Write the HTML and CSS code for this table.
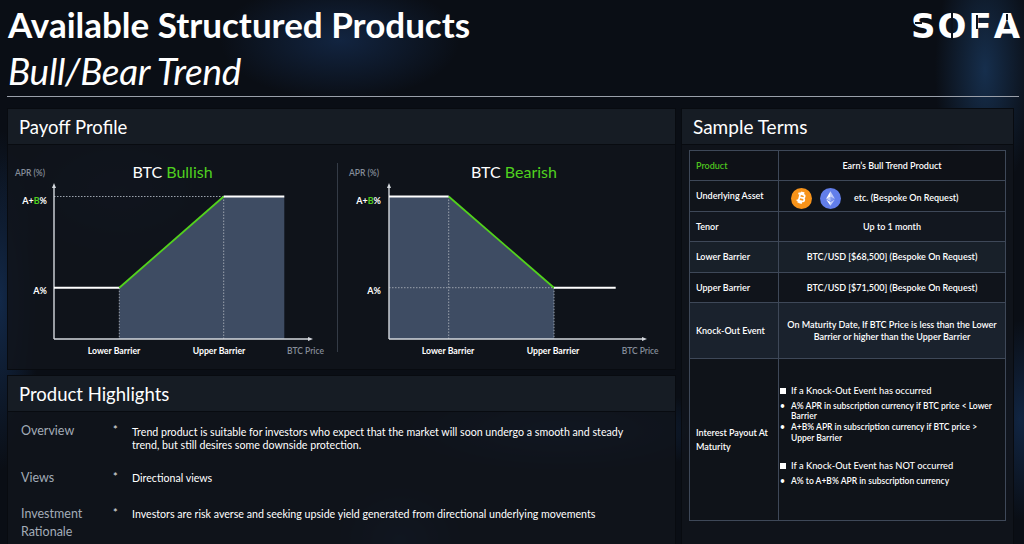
FILE: index.html
```html
<!DOCTYPE html>
<html lang="en">
<head>
<meta charset="utf-8">
<title>Available Structured Products</title>
<link rel="stylesheet" href="styles.css">
</head>
<body>
<header class="top">
  <div class="titles">
    <h1 class="title">Available Structured Products</h1>
    <h2 class="subtitle">Bull/Bear Trend</h2>
  </div>
  <div class="logo"><span class="l-s">S</span><span class="l-o">O</span><span class="l-f">F</span><span class="l-a">A</span></div>
</header>
<div class="rule"></div>
<main class="grid">
  <div class="leftcol">
    <section class="panel payoff">
      <div class="panel-head">Payoff Profile</div>
      <div class="charts">
        <svg class="chart" width="329" height="215" viewBox="0 0 329 215">
          <text x="7" y="26" class="axis-t">APR (%)</text>
          <text x="164.5" y="27.5" class="ttl" text-anchor="middle">BTC <tspan class="g">Bullish</tspan></text>
          <polygon points="111.3,137.7 215.7,46.5 276.3,46.5 276.3,189 111.3,189" class="fill"/>
          <line x1="46" y1="46.5" x2="215.7" y2="46.5" class="dot"/>
          <line x1="215.7" y1="46.5" x2="215.7" y2="189" class="dot"/>
          <line x1="111.3" y1="137.7" x2="111.3" y2="189" class="dot"/>
          <line x1="46" y1="189" x2="46" y2="37" class="ax"/>
          <polygon points="46,33 44,38 48,38" class="arrow"/>
          <line x1="46" y1="189" x2="301" y2="189" class="ax"/>
          <polygon points="305,189 300,187 300,191" class="arrow"/>
          <line x1="46" y1="137.7" x2="111.3" y2="137.7" class="wl"/>
          <line x1="111.3" y1="137.7" x2="215.7" y2="46.5" class="gl"/>
          <line x1="215.7" y1="46.5" x2="276.3" y2="46.5" class="wl"/>
          <text x="39" y="53.5" class="lvl" text-anchor="end">A+<tspan class="g">B</tspan>%</text>
          <text x="39" y="143.5" class="lvl" text-anchor="end">A%</text>
          <text x="106" y="204" class="xl" text-anchor="middle">Lower Barrier</text>
          <text x="211" y="204" class="xl" text-anchor="middle">Upper Barrier</text>
          <text x="279" y="204" class="axis-t">BTC Price</text>
        </svg>
        <div class="sep"></div>
        <svg class="chart" width="338" height="215" viewBox="0 0 338 215">
          <text x="11" y="26" class="axis-t">APR (%)</text>
          <text x="176" y="27.5" class="ttl" text-anchor="middle">BTC <tspan class="g">Bearish</tspan></text>
          <polygon points="51,46.5 110.7,46.5 216,137.7 216,189 51,189" class="fill"/>
          <line x1="110.7" y1="46.5" x2="110.7" y2="189" class="dot"/>
          <line x1="51" y1="137.7" x2="216" y2="137.7" class="dot"/>
          <line x1="216" y1="137.7" x2="216" y2="189" class="dot"/>
          <line x1="51" y1="189" x2="51" y2="37" class="ax"/>
          <polygon points="51,33 49,38 53,38" class="arrow"/>
          <line x1="51" y1="189" x2="305" y2="189" class="ax"/>
          <polygon points="309,189 304,187 304,191" class="arrow"/>
          <line x1="51" y1="46.5" x2="110.7" y2="46.5" class="wl"/>
          <line x1="110.7" y1="46.5" x2="216" y2="137.7" class="gl"/>
          <line x1="216" y1="137.7" x2="277.7" y2="137.7" class="wl"/>
          <text x="43" y="53.5" class="lvl" text-anchor="end">A+<tspan class="g">B</tspan>%</text>
          <text x="43" y="143.5" class="lvl" text-anchor="end">A%</text>
          <text x="110" y="204" class="xl" text-anchor="middle">Lower Barrier</text>
          <text x="215" y="204" class="xl" text-anchor="middle">Upper Barrier</text>
          <text x="283.7" y="204" class="axis-t">BTC Price</text>
        </svg>
      </div>
    </section>
    <section class="panel highlights">
      <div class="panel-head">Product Highlights</div>
      <div class="hl-list">
        <div class="hl-label">Overview</div>
        <div class="hl-star">*</div>
        <div class="hl-text">Trend product is suitable for investors who expect that the market will soon undergo a smooth and steady trend, but still desires some downside protection.</div>
        <div class="hl-label">Views</div>
        <div class="hl-star">*</div>
        <div class="hl-text">Directional views</div>
        <div class="hl-label">Investment Rationale</div>
        <div class="hl-star">*</div>
        <div class="hl-text">Investors are risk averse and seeking upside yield generated from directional underlying movements</div>
      </div>
    </section>
  </div>
  <section class="panel terms">
    <div class="panel-head">Sample Terms</div>
    <table class="terms-table">
      <tr class="r-product"><th class="green">Product</th><td>Earn’s Bull Trend Product</td></tr>
      <tr class="r-under"><th>Underlying Asset</th><td class="assets">
        <div class="asset-row">
          <svg class="coin" width="21" height="21" viewBox="0 0 24 24">
            <circle cx="12" cy="12" r="12" fill="#f7931a"/>
            <g transform="rotate(14 12 12)" stroke="#fff" stroke-width="1.9" fill="none" stroke-linecap="square">
              <path d="M9.4 7.2h3.4c1.3 0 2.2.8 2.2 1.95s-.9 1.95-2.2 1.95H9.4zM9.4 11.1h3.8c1.4 0 2.3.8 2.3 2s-.9 2-2.3 2H9.4zM9.4 6.6v9.9M8 7.2h1.4M8 15.1h1.4M10.8 5.3v1.4M12.7 5.3v1.4M10.8 15.6v1.4M12.7 15.6v1.4"/>
            </g>
          </svg>
          <svg class="coin" width="21" height="21" viewBox="0 0 24 24">
            <circle cx="12" cy="12" r="12" fill="#627eea"/>
            <polygon points="12,3.8 12,9.9 17,12.2" fill="#fff" fill-opacity="0.6"/>
            <polygon points="12,3.8 7,12.2 12,9.9" fill="#fff"/>
            <polygon points="12,9.9 12,15.1 17,12.2" fill="#fff" fill-opacity="0.2"/>
            <polygon points="12,9.9 7,12.2 12,15.1" fill="#fff" fill-opacity="0.6"/>
            <polygon points="12,16.1 12,20.2 17,13.2" fill="#fff" fill-opacity="0.6"/>
            <polygon points="12,16.1 7,13.2 12,20.2" fill="#fff"/>
          </svg>
          <span class="etc">etc. (Bespoke On Request)</span>
        </div>
      </td></tr>
      <tr class="r-tenor"><th>Tenor</th><td>Up to 1 month</td></tr>
      <tr class="r-lower"><th>Lower Barrier</th><td>BTC/USD [$68,500] (Bespoke On Request)</td></tr>
      <tr class="r-upper"><th>Upper Barrier</th><td>BTC/USD [$71,500] (Bespoke On Request)</td></tr>
      <tr class="r-ko"><th>Knock-Out Event</th><td class="ko">On Maturity Date, If BTC Price is less than the Lower Barrier or higher than the Upper Barrier</td></tr>
      <tr class="r-int"><th>Interest Payout At Maturity</th><td class="payout">
        <p class="ph"><span class="sq"></span>If a Knock-Out Event has occurred</p>
        <ul class="sub">
          <li>A% APR in subscription currency if BTC price &lt; Lower Barrier</li>
          <li>A+B% APR in subscription currency if BTC price &gt; Upper Barrier</li>
        </ul>
        <p class="ph ph2"><span class="sq"></span>If a Knock-Out Event has NOT occurred</p>
        <ul class="sub">
          <li>A% to A+B% APR in subscription currency</li>
        </ul>
      </td></tr>
    </table>
  </section>
</main>
</body>
</html>
```

FILE: styles.css
```css
html, body {
  margin: 0;
  padding: 0;
}

body {
  width: 1024px;
  height: 544px;
  overflow: hidden;
  color: #ffffff;
  font-family: "Lato", "Open Sans", sans-serif;
  background-color: #0a0e15;
  background-image:
    radial-gradient(ellipse 50px 130px at 985px 70px, rgba(40, 95, 160, 0.4), transparent),
    radial-gradient(ellipse 120px 60px at 340px 40px, rgba(30, 70, 130, 0.4), transparent),
    radial-gradient(ellipse 170px 45px at 560px 430px, rgba(30, 80, 150, 0.4), transparent),
    radial-gradient(ellipse 40px 170px at 0px 300px, rgba(30, 80, 150, 0.4), transparent),
    radial-gradient(ellipse 130px 80px at 120px 190px, rgba(30, 70, 130, 0.25), transparent),
    radial-gradient(ellipse 70px 60px at 400px 540px, rgba(30, 80, 150, 0.35), transparent),
    radial-gradient(ellipse 40px 100px at 1020px 420px, rgba(30, 80, 150, 0.35), transparent);
}

.top {
  display: flex;
  justify-content: space-between;
  align-items: flex-start;
  height: 96px;
  padding: 4px 4px 0 8px;
  box-sizing: border-box;
}

.title {
  margin: 0;
  font-size: 35px;
  font-weight: 700;
  line-height: 40px;
}

.subtitle {
  margin: 7px 0 0 0;
  font-size: 37px;
  font-weight: 400;
  font-style: italic;
  line-height: 40px;
  letter-spacing: -0.3px;
}

.logo {
  display: flex;
  margin-top: 2px;
  font-family: "DejaVu Sans", sans-serif;
  font-weight: 700;
  font-size: 34px;
  line-height: 40px;
  column-gap: 2px;
}

.logo span {
  position: relative;
  display: block;
}

.logo span::after {
  content: "";
  position: absolute;
  background: #0c121c;
}

.l-o::after {
  left: 50%;
  top: 6px;
  bottom: 6px;
  width: 2px;
  margin-left: -1px;
}

.l-f::after {
  left: 8px;
  top: 9px;
  height: 14px;
  width: 2px;
}

.l-a::after {
  left: 50%;
  top: 8px;
  height: 6px;
  width: 2px;
  margin-left: -1px;
}

.l-s::after {
  left: 4px;
  top: 16px;
  height: 2px;
  width: 7px;
}

.rule {
  height: 1px;
  margin: 0 5px 0 7px;
  background: #9aa0aa;
}

.grid {
  display: grid;
  grid-template-columns: 669px 333px;
  column-gap: 5px;
  padding: 11px 0 0 7px;
}

.leftcol {
  display: flex;
  flex-direction: column;
  row-gap: 5px;
}

.panel {
  background: rgba(16, 20, 27, 0.86);
  border: 1px solid #080b10;
  box-sizing: border-box;
}

.panel-head {
  height: 36px;
  line-height: 36px;
  padding-left: 11px;
  font-size: 18.5px;
  background: rgba(23, 28, 37, 0.95);
  border-bottom: 1px solid #080b10;
  box-sizing: border-box;
}

.payoff {
  height: 262px;
}

.charts {
  display: flex;
  align-items: flex-start;
  padding-top: 5px;
}

.chart {
  display: block;
  flex: none;
}

.sep {
  flex: none;
  width: 1px;
  height: 189px;
  margin-top: 13px;
  background: #343b46;
}

.axis-t {
  font-size: 8.5px;
  fill: #858d99;
  font-weight: 600;
}

.ttl {
  font-size: 16px;
  fill: #ffffff;
}

.g {
  fill: #4fd11f;
}

.lvl {
  font-size: 9px;
  font-weight: 700;
  fill: #ffffff;
}

.xl {
  font-size: 8.7px;
  font-weight: 700;
  fill: #ffffff;
}

.fill {
  fill: #3e4c63;
}

.dot {
  stroke: #9aa2ad;
  stroke-width: 1;
  stroke-dasharray: 1.5 1.5;
}

.ax {
  stroke: #d5d9de;
  stroke-width: 1.4;
}

.arrow {
  fill: #d5d9de;
}

.wl {
  stroke: #ffffff;
  stroke-width: 2;
}

.gl {
  stroke: #52d21c;
  stroke-width: 1.8;
}

.highlights {
  height: 180px;
}

.hl-list {
  display: grid;
  grid-template-columns: 92px 19px 510px;
  row-gap: 18px;
  padding: 10px 0 0 13px;
}

.hl-label {
  font-size: 12.5px;
  line-height: 18px;
  color: #a3acb8;
  font-weight: 400;
}

.hl-star {
  font-size: 11px;
  line-height: 13px;
  padding-top: 1px;
  color: #e6e8eb;
}

.hl-text {
  font-size: 10.65px;
  line-height: 13px;
  padding-top: 2.5px;
  color: #ffffff;
}

.terms {
  height: 440px;
}

.terms .panel-head {
  padding-left: 11px;
  font-size: 19px;
}

.terms-table {
  margin: 5px 0 0 7px;
  width: 317px;
  border-collapse: collapse;
  border: 1px solid #7a8392;
  font-size: 9px;
  font-weight: 600;
}

.terms-table th,
.terms-table td {
  border: 1px solid #3e4858;
  padding: 0 6px;
  vertical-align: middle;
}

.terms-table th {
  width: 76px;
  text-align: left;
  font-weight: 600;
  line-height: 13.4px;
}

.terms-table td {
  text-align: center;
  line-height: 12px;
}

.green {
  color: #4fc51f;
}

.r-product { height: 30px; background: #0e1117; }
.r-under { height: 31px; background: #10141a; }
.r-tenor { height: 30px; background: #12171f; }
.r-lower { height: 31px; background: #182029; }
.r-upper { height: 30px; background: #10141b; }
.r-ko { height: 56px; background: #1a222d; }
.r-int { height: 162px; background: #0f1319; }

.terms-table td.assets {
  text-align: left;
  padding-left: 12px;
}

.asset-row {
  display: flex;
  align-items: center;
  padding-top: 4px;
}

.coin {
  display: block;
  flex: none;
  margin-right: 8px;
}

.etc {
  margin-left: 5px;
}

.terms-table td.payout {
  text-align: left;
  vertical-align: top;
  padding: 26px 6px 0 1px;
}

.ph {
  margin: 0;
  display: flex;
  align-items: center;
  font-size: 9.3px;
  line-height: 12px;
  font-weight: 500;
}

.ph2 {
  margin-top: 17px;
}

.sq {
  flex: none;
  width: 6px;
  height: 6px;
  background: #ffffff;
  margin-right: 5px;
}

.sub {
  margin: 3.5px 0 0 0;
  padding: 0 0 0 11px;
  list-style: none;
  font-size: 8.5px;
  line-height: 10.7px;
  font-weight: 600;
}

.sub li {
  position: relative;
}

.sub li::before {
  content: "•";
  position: absolute;
  left: -11px;
  top: 0;
}
```
